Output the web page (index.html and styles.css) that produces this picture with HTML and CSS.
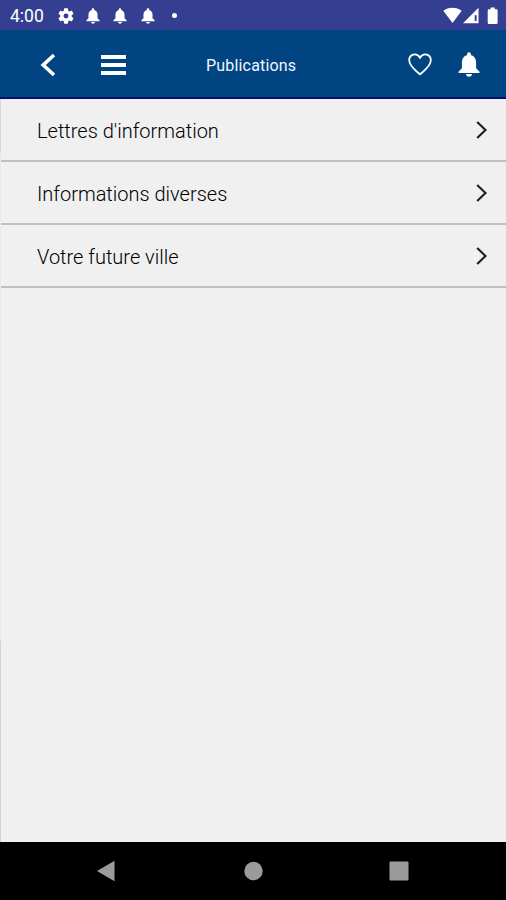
FILE: index.html
```html
<!DOCTYPE html>
<html lang="fr">
<head>
<meta charset="utf-8">
<title>Publications</title>
<link rel="stylesheet" href="styles.css">
</head>
<body>
<svg class="defs" width="0" height="0">
  <symbol id="bell" viewBox="0 0 22 25"><path d="M11 0.3C12.2 .3 12.9 1.1 12.9 2.2V3.1C16.3 4 18.1 6.8 18.1 10.4V16.2L21.5 19.7V20.9H.5V19.7L3.9 16.2V10.4C3.9 6.8 5.7 4 9.100 3.100V2.200C9.100 1.100 9.800 .3 11 .3ZM8 22H14C13.900 23.700 12.700 24.700 11 24.700S8.100 23.700 8 22Z"/></symbol>
  <symbol id="chevron" viewBox="0 0 14 20"><path d="M2.200 2L10.500 10L2.200 18" fill="none" stroke="#1e1e1e" stroke-width="2.100"/></symbol>
</svg>
<div class="screen">
  <div class="status">
    <span class="clock">4:00</span>
    <svg class="gear" viewBox="2 2 20 20"><path fill-rule="evenodd" d="M19.140 12.940c.04-.3.060-.610.060-.940 0-.320-.020-.640-.070-.940l2.030-1.580c.180-.140.230-.410.120-.610l-1.920-3.320c-.120-.220-.370-.290-.590-.220l-2.390.960c-.500-.380-1.030-.700-1.620-.940l-.360-2.540c-.040-.240-.240-.410-.480-.410h-3.840c-.240 0-.430.170-.470.410l-.360 2.540c-.590.240-1.130.570-1.620.940l-2.390-.960c-.220-.080-.470 0-.590.220L2.740 8.870c-.120.210-.080.470.120.610l2.030 1.580c-.050.300-.090.630-.090.940s.020.640.070.940l-2.030 1.580c-.180.140-.230.410-.120.610l1.920 3.320c.120.220.370.290.590.220l2.390-.960c.500.380 1.030.700 1.620.940l.360 2.540c.050.240.240.410.480.410h3.840c.240 0 .440-.170.470-.410l.360-2.540c.590-.240 1.130-.560 1.620-.940l2.390.960c.220.080.470 0 .590-.220l1.920-3.320c.120-.220.070-.470-.120-.610zM12 15.100A3.100 3.100 0 1 1 12 8.900a3.100 3.100 0 0 1 0 6.200z"/></svg>
    <svg class="mini-bell"><use href="#bell"/></svg>
    <svg class="mini-bell"><use href="#bell"/></svg>
    <svg class="mini-bell"><use href="#bell"/></svg>
    <span class="dot"></span>
    <svg class="system" viewBox="0 0 56 18"><path d="M0.300 3.800C5.300-.3 13.700-.3 18.700 3.800L9.500 16Z"/><path d="M35.500 .8V16.300H20Z"/><path d="M31.700 8.200H33.600V14H31.700Z" fill="#343f91"/><path d="M46 2.200H47.600V.4H51.700V2.200H53.300Q54.600 2.200 54.600 3.500V15.800Q54.600 17 53.300 17H46Q44.700 17 44.700 15.800V3.500Q44.700 2.200 46 2.200Z"/></svg>
  </div>
  <header class="header">
    <svg class="back" viewBox="0 0 16 24"><path d="M14 2L3.200 12L14 22" fill="none" stroke="#fff" stroke-width="3.600"/></svg>
    <span class="menu"><i></i><i></i><i></i></span>
    <h1>Publications</h1>
    <svg class="heart" viewBox="0 0 24 23"><path d="M12 21.300C7.500 17.500 1.200 13.100 1.200 7.300C1.200 1.200 8.600-.8 12 4.700C15.400-.8 22.800 1.200 22.800 7.300C22.800 13.100 16.500 17.500 12 21.300Z" fill="none" stroke="#fff" stroke-width="1.800"/></svg>
    <svg class="bell"><use href="#bell"/></svg>
  </header>
  <main>
    <div class="row"><span>Lettres d'information</span><svg><use href="#chevron"/></svg></div>
    <div class="row"><span>Informations diverses</span><svg><use href="#chevron"/></svg></div>
    <div class="row"><span>Votre future ville</span><svg><use href="#chevron"/></svg></div>
  </main>
  <nav class="nav">
    <svg viewBox="0 0 20 22"><path d="M1 11L18.500 .8V21.200Z"/></svg>
    <svg viewBox="0 0 20 22"><circle cx="10.500" cy="11" r="9.200"/></svg>
    <svg viewBox="0 0 20 22"><rect x=".5" y="1.500" width="19" height="19" rx="1"/></svg>
  </nav>
</div>
</body>
</html>
```
FILE: styles.css
```css
* { box-sizing: border-box; }
body { margin: 0; font-family: Roboto, "Liberation Sans", sans-serif; }
.defs { display: block; }
.screen { width: 506px; height: 900px; display: flex; flex-direction: column; background: #f0f0f0; }
svg { display: block; flex: none; fill: #fff; }
.status { height: 30px; flex: none; display: flex; align-items: center; padding: 1px 7px 0 10px; background: #343f91; color: #fff; }
.clock { width: 48px; font-size: 17.5px; line-height: 30px; }
.gear { width: 16px; height: 16px; margin-right: 12px; }
.mini-bell { width: 14px; height: 16px; margin-right: 13.300px; }
.dot { width: 5px; height: 5px; margin-left: 4px; border-radius: 50%; background: #fff; }
.system { width: 56px; height: 18px; margin-left: auto; }
.header { height: 69px; flex: none; display: flex; align-items: center; padding: 3px 26px 0 40px; background: #004581; border-bottom: 2px solid #00106f; }
.back { width: 16px; height: 24px; margin-right: 44.5px; }
.menu { width: 25px; display: flex; flex-direction: column; gap: 4px; }
.menu i { height: 4px; background: #fff; }
h1 { margin: 2px 0 0 80.5px; font-size: 16px; line-height: 20px; font-weight: 400; letter-spacing: .18px; color: #f5f5ff; white-space: nowrap; }
.heart { width: 24px; height: 23px; margin-left: auto; margin-right: 26px; margin-top: -1px; }
.bell { width: 22px; height: 25px; margin-top: -2px; }
main { flex: 1; border-left: 1px solid; border-image: linear-gradient(#d5d5e5 0 55px, #e8e8ea 55px 542px, #d0d0e0 542px) 1; }
.row { height: 63px; display: flex; align-items: center; justify-content: space-between; padding: 2px 17px 0 36px; border-bottom: 2px solid #c0c0c0; color: #000; font-size: 20px; font-weight: 300; line-height: 26px; }
.row svg { width: 14px; height: 20px; margin-top: -1px; }
.nav { height: 58px; flex: none; display: flex; align-items: center; justify-content: space-between; padding: 0 97px 0 96px; background: #000; }
.nav svg { width: 20px; height: 22px; fill: #9b9b9b; }
```
